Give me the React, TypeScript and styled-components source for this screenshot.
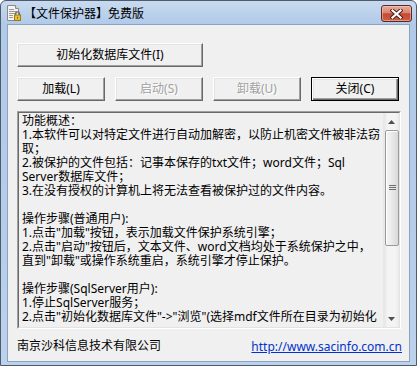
import React from "react";
import styled, { createGlobalStyle } from "styled-components";

const Global = createGlobalStyle`
  html, body { margin: 0; padding: 0; width: 417px; height: 366px; overflow: hidden; background: #fff; }
  * { box-sizing: border-box; }
`;

const FONT = `"Noto Sans", "Noto Sans CJK SC", sans-serif`;

const Window = styled.div`
  width: 417px;
  height: 366px;
  display: flex;
  flex-direction: column;
  border: 1px solid #4d5b6d;
  border-radius: 6px 6px 0 0;
  background: linear-gradient(to bottom, #c8daef 0px, #b0cae9 23px, #b6cdea 60%, #bcd2ec 100%);
  padding: 0 6px 3px 6px;
  font-family: ${FONT};
`;

const TitleBar = styled.div`
  height: 23px;
  margin: 0 -6px;
  padding: 4px 4px 0 4px;
  display: flex;
  align-items: flex-start;
`;

const TitleIcon = styled.svg`
  width: 16px;
  height: 16px;
  flex: none;
`;

const TitleText = styled.div`
  margin: 1px 0 0 3px;
  font-size: 12px;
  line-height: 16px;
  color: #000;
  flex: 1;
  white-space: nowrap;
`;

const CloseBtn = styled.div`
  width: 31px;
  height: 17px;
  border: 1px solid #5e2626;
  border-radius: 3px;
  background: linear-gradient(to bottom, #e8ab9d 0%, #d98471 45%, #c5482f 52%, #cd5e43 100%);
  box-shadow: inset 0 0 0 1px rgba(255, 220, 210, 0.45);
  display: flex;
  align-items: center;
  justify-content: center;
  flex: none;
`;

const Client = styled.div`
  flex: 1;
  display: flex;
  flex-direction: column;
  background: #f0f0f0;
  border: 1px solid #8ca3bf;
  padding: 18px 8px 0 9px;
`;

const Btn = styled.button<{ $w: number; $default?: boolean }>`
  width: ${(p) => p.$w}px;
  height: 24px;
  padding: 0;
  margin: 0;
  background: #f0f0f0;
  font-family: ${FONT};
  font-size: 12px;
  line-height: 14px;
  color: #000;
  border: 1px solid;
  border-color: ${(p) => (p.$default ? "#000" : "#fff #696969 #696969 #fff")};
  box-shadow: ${(p) =>
    p.$default
      ? "inset 1px 1px #fff, inset -1px -1px #696969, inset -2px -2px #a0a0a0, inset 2px 2px #e3e3e3"
      : "inset -1px -1px #a0a0a0, inset 1px 1px #e3e3e3"};
  &:disabled {
    color: #a0a0a0;
    text-shadow: 1px 1px 0 #fff;
  }
`;

const ButtonRow = styled.div`
  display: flex;
  gap: 10px;
  margin-top: 10px;
`;

const TextBox = styled.div`
  width: 384px;
  height: 218px;
  margin-top: 10px;
  border: 1px solid;
  border-color: #a0a0a0 #fff #fff #a0a0a0;
`;

const TextInner = styled.div`
  width: 100%;
  height: 100%;
  border: 1px solid;
  border-color: #696969 #e3e3e3 #e3e3e3 #696969;
  display: flex;
  overflow: hidden;
`;

const TextContent = styled.div`
  flex: 1;
  padding: 1px 0 0 3px;
  font-size: 12px;
  line-height: 14px;
  color: #000;
  overflow: hidden;
`;

const Line = styled.div`
  height: 14px;
  white-space: pre;
`;

const ScrollBar = styled.div`
  width: 16px;
  flex: none;
  display: flex;
  flex-direction: column;
  background: linear-gradient(to right, #e6e6e6, #f4f4f4 25%, #f4f4f4 75%, #eaeaea);
  border-left: 1px solid #e8e8e8;
`;

const ArrowBtn = styled.div`
  height: 17px;
  display: flex;
  align-items: center;
  justify-content: center;
  flex: none;
`;

const Track = styled.div`
  flex: 1;
  display: flex;
  flex-direction: column;
`;

const Thumb = styled.div`
  height: 116px;
  margin: 0 0 0 1px;
  border: 1px solid #9a9a9a;
  border-radius: 2px;
  background: linear-gradient(to right, #f6f6f6, #e9e9e9 50%, #d9d9d9);
  box-shadow: inset 1px 1px #fff;
  display: flex;
  align-items: center;
  justify-content: center;
`;

const Footer = styled.div`
  margin-top: auto;
  height: 18px;
  margin-bottom: 6px;
  display: flex;
  justify-content: space-between;
  align-items: center;
  font-size: 12px;
  line-height: 16px;
  color: #000;
`;

const Link = styled.a`
  color: #0033cc;
  text-decoration: underline;
  margin-top: 2px;
  margin-right: -1px;
`;

const lines = [
  "功能概述：",
  "1.本软件可以对特定文件进行自动加解密，以防止机密文件被非法窃",
  "取；",
  "2.被保护的文件包括：记事本保存的txt文件；word文件；Sql",
  "Server数据库文件；",
  "3.在没有授权的计算机上将无法查看被保护过的文件内容。",
  "",
  "操作步骤(普通用户):",
  '1.点击"加载"按钮，表示加载文件保护系统引擎；',
  '2.点击"启动"按钮后，文本文件、word文档均处于系统保护之中，',
  '直到"卸载"或操作系统重启，系统引擎才停止保护。',
  "",
  "操作步骤(SqlServer用户):",
  "1.停止SqlServer服务；",
  '2.点击"初始化数据库文件"->"浏览"(选择mdf文件所在目录为初始化',
];

const AppIcon = () => (
  <TitleIcon viewBox="0 0 16 16">
    <path d="M2.5 0.5 H10.5 L13.5 3.5 V15.5 H2.5 Z" fill="#f4f4f4" stroke="#8a8a8a" />
    <path d="M10.5 0.5 V3.5 H13.5" fill="#dcdcdc" stroke="#8a8a8a" />
    <g stroke="#9a9a9a">
      <line x1="4" y1="4.5" x2="9" y2="4.5" />
      <line x1="4" y1="6.5" x2="12" y2="6.5" />
      <line x1="4" y1="8.5" x2="12" y2="8.5" />
      <line x1="4" y1="10.5" x2="8" y2="10.5" />
      <line x1="4" y1="12.5" x2="8" y2="12.5" />
    </g>
    <path d="M10.5 10 V8.8 a2 2 0 0 1 4 0 V10" fill="none" stroke="#6b6b6b" strokeWidth="1.2" />
    <rect x="9.5" y="10" width="6" height="5.5" fill="#e8c233" stroke="#9c7a10" />
    <rect x="12" y="11.8" width="1" height="2" fill="#8a6a0a" />
  </TitleIcon>
);

const CloseGlyph = () => (
  <svg width="13" height="10" viewBox="0 0 13 10">
    <path d="M2.5 1.5 L10.5 8.5 M10.5 1.5 L2.5 8.5" stroke="#4a1a1a" strokeWidth="4" strokeLinecap="square" />
    <path d="M2.5 1.5 L10.5 8.5 M10.5 1.5 L2.5 8.5" stroke="#fff" strokeWidth="2.2" strokeLinecap="square" />
  </svg>
);

const UpArrow = () => (
  <svg width="7" height="4" viewBox="0 0 7 4">
    <polygon points="3.5,0 7,4 0,4" fill="#505050" />
  </svg>
);

const DownArrow = () => (
  <svg width="7" height="4" viewBox="0 0 7 4">
    <polygon points="0,0 7,0 3.5,4" fill="#505050" />
  </svg>
);

const Grip = () => (
  <svg width="7" height="6" viewBox="0 0 7 6">
    <g stroke="#6e6e6e">
      <line x1="0" y1="0.5" x2="7" y2="0.5" />
      <line x1="0" y1="2.5" x2="7" y2="2.5" />
      <line x1="0" y1="4.5" x2="7" y2="4.5" />
    </g>
  </svg>
);

export default function App() {
  return (
    <>
      <Global />
      <Window>
        <TitleBar>
          <AppIcon />
          <TitleText>【文件保护器】免费版</TitleText>
          <CloseBtn>
            <CloseGlyph />
          </CloseBtn>
        </TitleBar>
        <Client>
          <Btn $w={186}>初始化数据库文件(I)</Btn>
          <ButtonRow>
            <Btn $w={88}>加载(L)</Btn>
            <Btn $w={88} disabled>
              启动(S)
            </Btn>
            <Btn $w={88} disabled>
              卸载(U)
            </Btn>
            <Btn $w={88} $default>
              关闭(C)
            </Btn>
          </ButtonRow>
          <TextBox>
            <TextInner>
              <TextContent>
                {lines.map((l, i) => (
                  <Line key={i}>{l}</Line>
                ))}
              </TextContent>
              <ScrollBar>
                <ArrowBtn>
                  <UpArrow />
                </ArrowBtn>
                <Track>
                  <Thumb>
                    <Grip />
                  </Thumb>
                </Track>
                <ArrowBtn>
                  <DownArrow />
                </ArrowBtn>
              </ScrollBar>
            </TextInner>
          </TextBox>
          <Footer>
            <span>南京沙科信息技术有限公司</span>
            <Link href="#">http://www.sacinfo.com.cn</Link>
          </Footer>
        </Client>
      </Window>
    </>
  );
}
